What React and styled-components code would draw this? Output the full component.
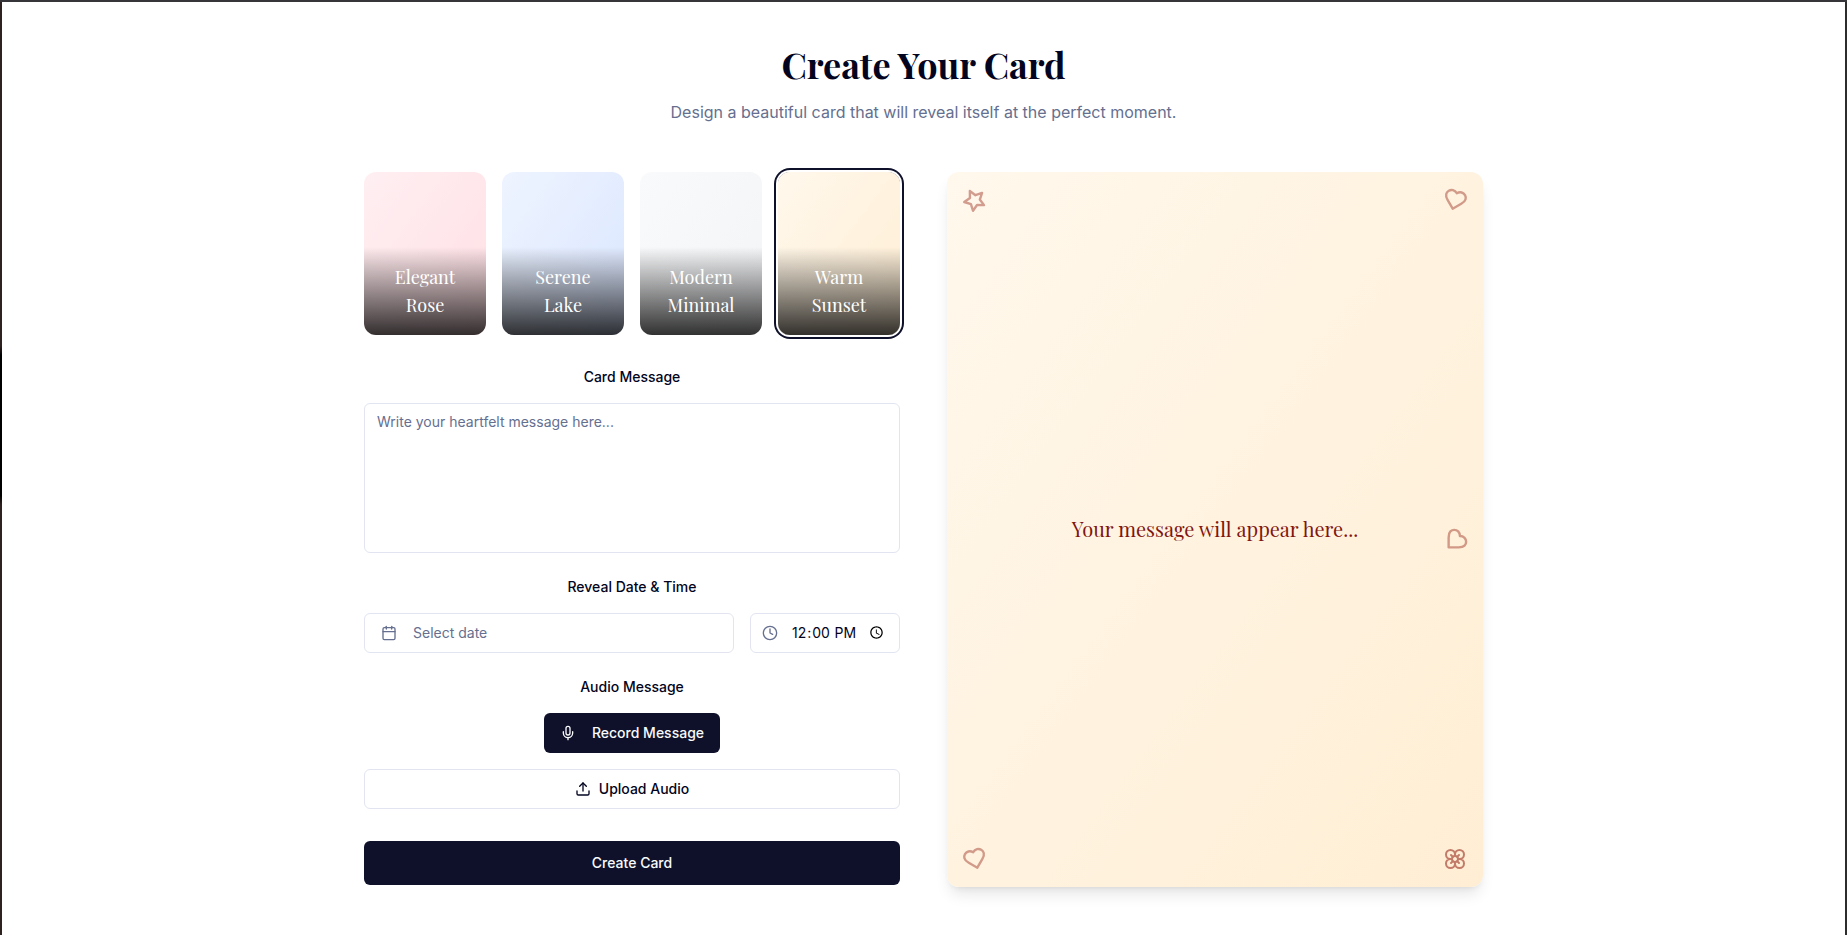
import { useState } from "react";
import styled, { createGlobalStyle } from "styled-components";
import { Calendar, Clock, Flower, Mic, Upload } from "lucide-react";

const templates = [
  { id: "rose", name: "Elegant Rose", from: "#ffeff2", to: "#ffdfe4" },
  { id: "lake", name: "Serene Lake", from: "#eef4ff", to: "#dae6ff" },
  { id: "minimal", name: "Modern Minimal", from: "#f9fafb", to: "#f3f4f6" },
  { id: "sunset", name: "Warm Sunset", from: "#fff8ec", to: "#ffeed4" },
];

const Heart = () => (
  <svg width="24" height="24" viewBox="0 0 24 24">
    <path d="M19 14c1.49-1.46 3-3.21 3-5.5A5.5 5.5 0 0 0 16.5 3c-1.76 0-3 .5-4.5 2-1.5-1.5-2.74-2-4.5-2A5.5 5.5 0 0 0 2 8.5c0 2.3 1.5 4.05 3 5.5l7 7Z" />
  </svg>
);

const Star = () => (
  <svg width="24" height="24" viewBox="0 0 24 24">
    <polygon points="12 2 15.09 8.26 22 9.27 17 14.14 18.18 21.02 12 17.77 5.82 21.02 7 14.14 2 9.27 8.91 8.26 12 2" />
  </svg>
);

const App = () => {
  const [selected, setSelected] = useState("sunset");
  const [message, setMessage] = useState("");
  const [time, setTime] = useState("12:00");
  const current = templates.find((t) => t.id === selected);

  return (
    <Page>
      <GlobalStyle />
      <Container>
        <Header>
          <Title>Create Your Card</Title>
          <Subtitle>
            Design a beautiful card that will reveal itself at the perfect
            moment.
          </Subtitle>
        </Header>
        <Columns>
          <Form onSubmit={(e) => e.preventDefault()}>
            <Templates>
              {templates.map((t) => (
                <Template
                  key={t.id}
                  type="button"
                  $from={t.from}
                  $to={t.to}
                  $active={t.id === selected}
                  onClick={() => setSelected(t.id)}
                >
                  <TemplateName>{t.name}</TemplateName>
                </Template>
              ))}
            </Templates>
            <Fields>
              <Field>
                <Label htmlFor="message">Card Message</Label>
                <TextArea
                  id="message"
                  placeholder="Write your heartfelt message here..."
                  value={message}
                  onChange={(e) => setMessage(e.target.value)}
                />
              </Field>
              <Field>
                <Label htmlFor="date">Reveal Date &amp; Time</Label>
                <DateRow>
                  <DateButton id="date" type="button">
                    <Calendar size={16} />
                    Select date
                  </DateButton>
                  <TimeWrapper>
                    <Clock size={16} />
                    <TimeInput
                      type="time"
                      aria-label="Reveal time"
                      value={time}
                      onChange={(e) => setTime(e.target.value)}
                    />
                  </TimeWrapper>
                </DateRow>
              </Field>
              <Field>
                <Label htmlFor="record">Audio Message</Label>
                <RecordButton id="record" type="button">
                  <Mic size={16} />
                  Record Message
                </RecordButton>
                <UploadButton type="button">
                  <Upload size={16} />
                  Upload Audio
                </UploadButton>
              </Field>
            </Fields>
            <SubmitButton type="submit">Create Card</SubmitButton>
          </Form>
          <Preview $from={current.from} $to={current.to}>
            <Decoration $top="16px" $left="16px" $rotate={45}>
              <Star />
            </Decoration>
            <Decoration $top="16px" $right="16px" $rotate={15}>
              <Heart />
            </Decoration>
            <Decoration $top="50%" $right="16px" $rotate={45}>
              <Heart />
            </Decoration>
            <Decoration $bottom="16px" $left="16px" $rotate={-15}>
              <Heart />
            </Decoration>
            <Decoration $bottom="16px" $right="16px" $rotate={0} $strong>
              <Flower size={24} />
            </Decoration>
            <PreviewText>
              {message || "Your message will appear here..."}
            </PreviewText>
          </Preview>
        </Columns>
      </Container>
    </Page>
  );
};

const GlobalStyle = createGlobalStyle`
  *, *::before, *::after {
    box-sizing: border-box;
  }
  body {
    margin: 0;
    background: #fff;
    color: #020420;
    font-family: Inter, "Liberation Sans", sans-serif;
  }
  button, input, textarea {
    font-family: inherit;
  }
`;

const serif = `"Playfair Display", "Liberation Serif", serif`;

const Page = styled.main`
  min-height: 100vh;
  padding: 2px 2px 0;
  background: linear-gradient(#363539, #363539) top / 100% 2px no-repeat,
    linear-gradient(#2c2c2c, #2c2c2c) right / 2px 100% no-repeat,
    linear-gradient(#2e2220 37%, #000 38%, #000 53%, #2e2220 54%) left / 2px
      100% no-repeat,
    #fff;
`;

const Container = styled.div`
  max-width: 1151px;
  margin: 0 auto;
  padding: 42px 16px 48px;
`;

const Header = styled.header`
  margin-bottom: 48px;
  text-align: center;
`;

const Title = styled.h1`
  margin: 0 0 16px;
  font-family: ${serif};
  font-size: 36px;
  font-weight: 700;
  line-height: 40px;
`;

const Subtitle = styled.p`
  margin: 0;
  color: #656f8f;
  font-size: 16px;
  line-height: 24px;
`;

const Columns = styled.div`
  display: grid;
  grid-template-columns: repeat(2, minmax(0, 1fr));
  align-items: start;
  gap: 47px;

  @media (max-width: 900px) {
    grid-template-columns: 1fr;
  }
`;

const Form = styled.form`
  display: flex;
  flex-direction: column;
  gap: 32px;
`;

const Templates = styled.div`
  display: grid;
  grid-template-columns: repeat(4, 1fr);
  gap: 16px;
`;

const Template = styled.button`
  display: flex;
  align-items: flex-end;
  aspect-ratio: 3 / 4;
  padding: 0;
  border: none;
  border-radius: 12px;
  overflow: hidden;
  cursor: pointer;
  background: linear-gradient(
    to bottom right,
    ${(props) => props.$from},
    ${(props) => props.$to}
  );
  box-shadow: ${(props) =>
    props.$active ? "0 0 0 2px #fff, 0 0 0 4px #0f112a" : "none"};
`;

const TemplateName = styled.span`
  width: 100%;
  padding: 16px;
  background: linear-gradient(to top, rgba(0, 0, 0, 0.8), transparent);
  color: #fff;
  font-family: ${serif};
  font-size: 18px;
  line-height: 28px;
`;

const Fields = styled.div`
  display: flex;
  flex-direction: column;
  gap: 24px;
`;

const Field = styled.div`
  display: flex;
  flex-direction: column;
  gap: 16px;
`;

const Label = styled.label`
  font-size: 14px;
  font-weight: 500;
  line-height: 20px;
  text-align: center;
`;

const TextArea = styled.textarea`
  display: block;
  width: 100%;
  height: 150px;
  padding: 8px 12px;
  border: 1px solid #e2e5f1;
  border-radius: 6px;
  background: #fff;
  color: inherit;
  font-size: 14px;
  line-height: 20px;
  resize: none;

  &::placeholder {
    color: #656f8f;
  }
`;

const DateRow = styled.div`
  display: flex;
  gap: 16px;
`;

const Button = styled.button`
  display: flex;
  align-items: center;
  justify-content: center;
  height: 40px;
  padding: 0 16px;
  border: none;
  border-radius: 6px;
  background: #0f112a;
  color: #f8fafc;
  font-size: 14px;
  font-weight: 500;
  line-height: 20px;
  cursor: pointer;
`;

const DateButton = styled(Button)`
  flex: 1;
  justify-content: flex-start;
  gap: 16px;
  border: 1px solid #e2e5f1;
  background: #fff;
  color: #656f8f;
  font-weight: 400;
`;

const TimeWrapper = styled.div`
  position: relative;
  width: 150px;

  svg {
    position: absolute;
    top: 12px;
    left: 12px;
    color: #656f8f;
  }
`;

const TimeInput = styled.input`
  width: 100%;
  height: 40px;
  padding: 8px 12px 8px 40px;
  border: 1px solid #e2e5f1;
  border-radius: 6px;
  background: #fff;
  color: inherit;
  font-size: 14px;
  line-height: 20px;
`;

const RecordButton = styled(Button)`
  align-self: center;
  gap: 16px;
`;

const UploadButton = styled(Button)`
  gap: 8px;
  border: 1px solid #e2e5f1;
  background: #fff;
  color: #020420;
`;

const SubmitButton = styled(Button)`
  height: 44px;
`;

const Preview = styled.section`
  position: relative;
  display: flex;
  align-items: center;
  justify-content: center;
  aspect-ratio: 3 / 4;
  padding: 32px;
  border-radius: 12px;
  background: linear-gradient(
    to bottom right,
    ${(props) => props.$from},
    ${(props) => props.$to}
  );
  box-shadow: 0 10px 15px -3px rgba(0, 0, 0, 0.1),
    0 4px 6px -4px rgba(0, 0, 0, 0.1);
`;

const Decoration = styled.span`
  position: absolute;
  top: ${(props) => props.$top};
  right: ${(props) => props.$right};
  bottom: ${(props) => props.$bottom};
  left: ${(props) => props.$left};
  width: 24px;
  height: 24px;
  color: #9c3022;
  opacity: ${(props) => (props.$strong ? 0.6 : 0.45)};
  transform: rotate(${(props) => props.$rotate}deg);

  svg {
    display: block;
    fill: none;
    stroke: currentColor;
    stroke-width: ${(props) => (props.$strong ? 2 : 2.4)};
    stroke-linecap: round;
    stroke-linejoin: round;
  }
`;

const PreviewText = styled.p`
  margin: 0;
  color: #7f1611;
  font-family: ${serif};
  font-size: 20px;
  line-height: 32px;
  text-align: center;
`;

export default App;
